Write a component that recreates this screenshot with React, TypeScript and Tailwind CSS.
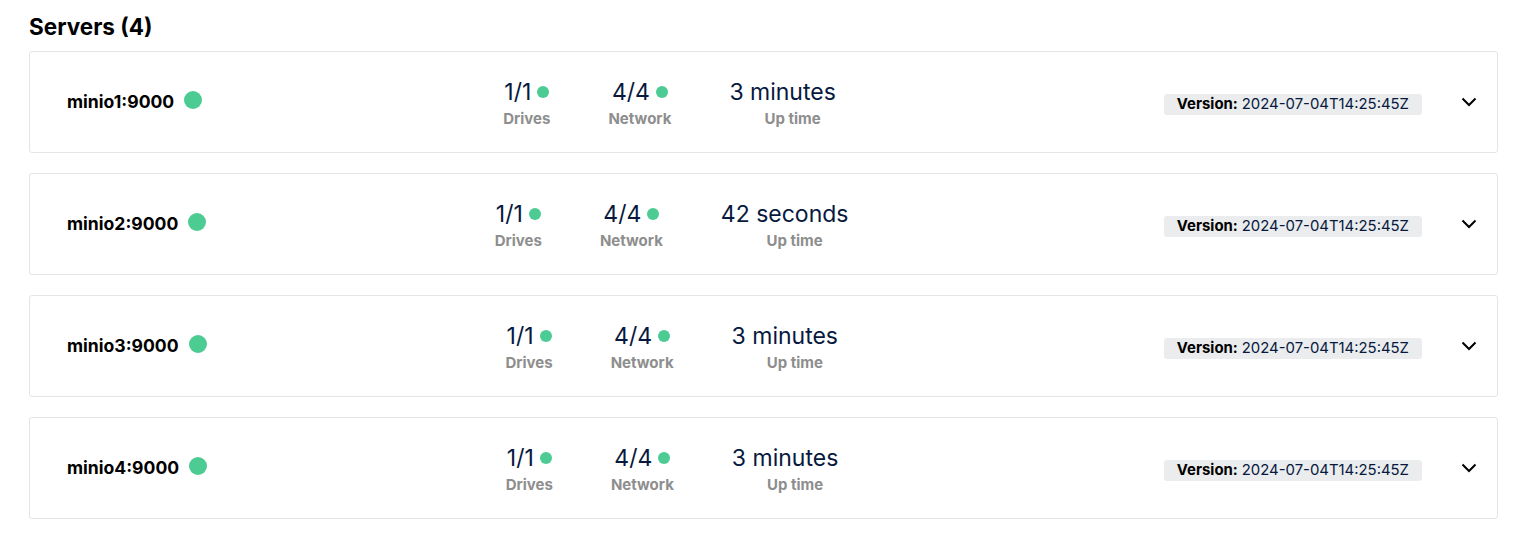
import React from 'react';

type Server = {
    name: string;
    drives: string;
    network: string;
    uptime: string;
    version: string;
};

const servers: Server[] = [
    {name: 'minio1:9000', drives: '1/1', network: '4/4', uptime: '3 minutes', version: '2024-07-04T14:25:45Z'},
    {name: 'minio2:9000', drives: '1/1', network: '4/4', uptime: '42 seconds', version: '2024-07-04T14:25:45Z'},
    {name: 'minio3:9000', drives: '1/1', network: '4/4', uptime: '3 minutes', version: '2024-07-04T14:25:45Z'},
    {name: 'minio4:9000', drives: '1/1', network: '4/4', uptime: '3 minutes', version: '2024-07-04T14:25:45Z'},
];

const Stat: React.FC<{value: string; label: string; dot?: boolean; shift?: boolean}> = ({value, label, dot, shift}) => (
    <div className="flex flex-col items-center">
        <div className="flex items-center text-[23px] leading-[28px] text-[#07193e]">
            <span>{value}</span>
            {dot && <span className="ml-[6px] w-3 h-3 rounded-full bg-[#4ccb92]"/>}
        </div>
        <div className={`text-[15px] font-bold leading-5 text-[#8e8e8e] mt-[3px] ${shift ? 'ml-5' : ''}`}>{label}</div>
    </div>
);

const ServerRow: React.FC<{server: Server}> = ({server}) => (
    <div className="flex items-center h-[102px] border border-[#e5e5e5] rounded-[3px] pl-[37px] pr-[20px] bg-white">
        <div className="flex items-center">
            <span className="text-[17.6px] font-bold text-black">{server.name}</span>
            <span className="ml-[10px] -mt-1 w-[18px] h-[18px] rounded-full bg-[#4ccb92]"/>
        </div>
        <div className="flex-1 flex justify-center items-center gap-[58px] mt-[2px]">
            <Stat value={server.drives} label="Drives" dot/>
            <Stat value={server.network} label="Network" dot/>
            <Stat value={server.uptime} label="Up time" shift/>
        </div>
        <div className="ml-[27px] mt-1 flex items-center h-[21px] px-[13px] rounded-[3px] bg-[#eaeced] text-[14.9px] text-[#07193e]">
            <span className="font-bold text-black mr-1">Version:</span>
            <span>{server.version}</span>
        </div>
        <button className="ml-[39px] w-[16px] flex justify-center">
            <svg width="16" height="10" viewBox="0 0 16 10" fill="none" stroke="black" strokeWidth="2">
                <path d="M1.5 1.5 L8 8 L14.5 1.5"/>
            </svg>
        </button>
    </div>
);

const App: React.FC = () => {
    return (
        <div className="min-h-screen bg-white px-[29px] pt-[12px]" style={{fontFamily: 'Inter, "Noto Sans", sans-serif'}}>
            <h2 className="text-[22.5px] font-bold text-black leading-[30px] mb-[9px]">Servers (4)</h2>
            <div className="flex flex-col gap-5 mr-[1px]">
                {servers.map((s) => (
                    <ServerRow key={s.name} server={s}/>
                ))}
            </div>
        </div>
    );
};

export default App;
